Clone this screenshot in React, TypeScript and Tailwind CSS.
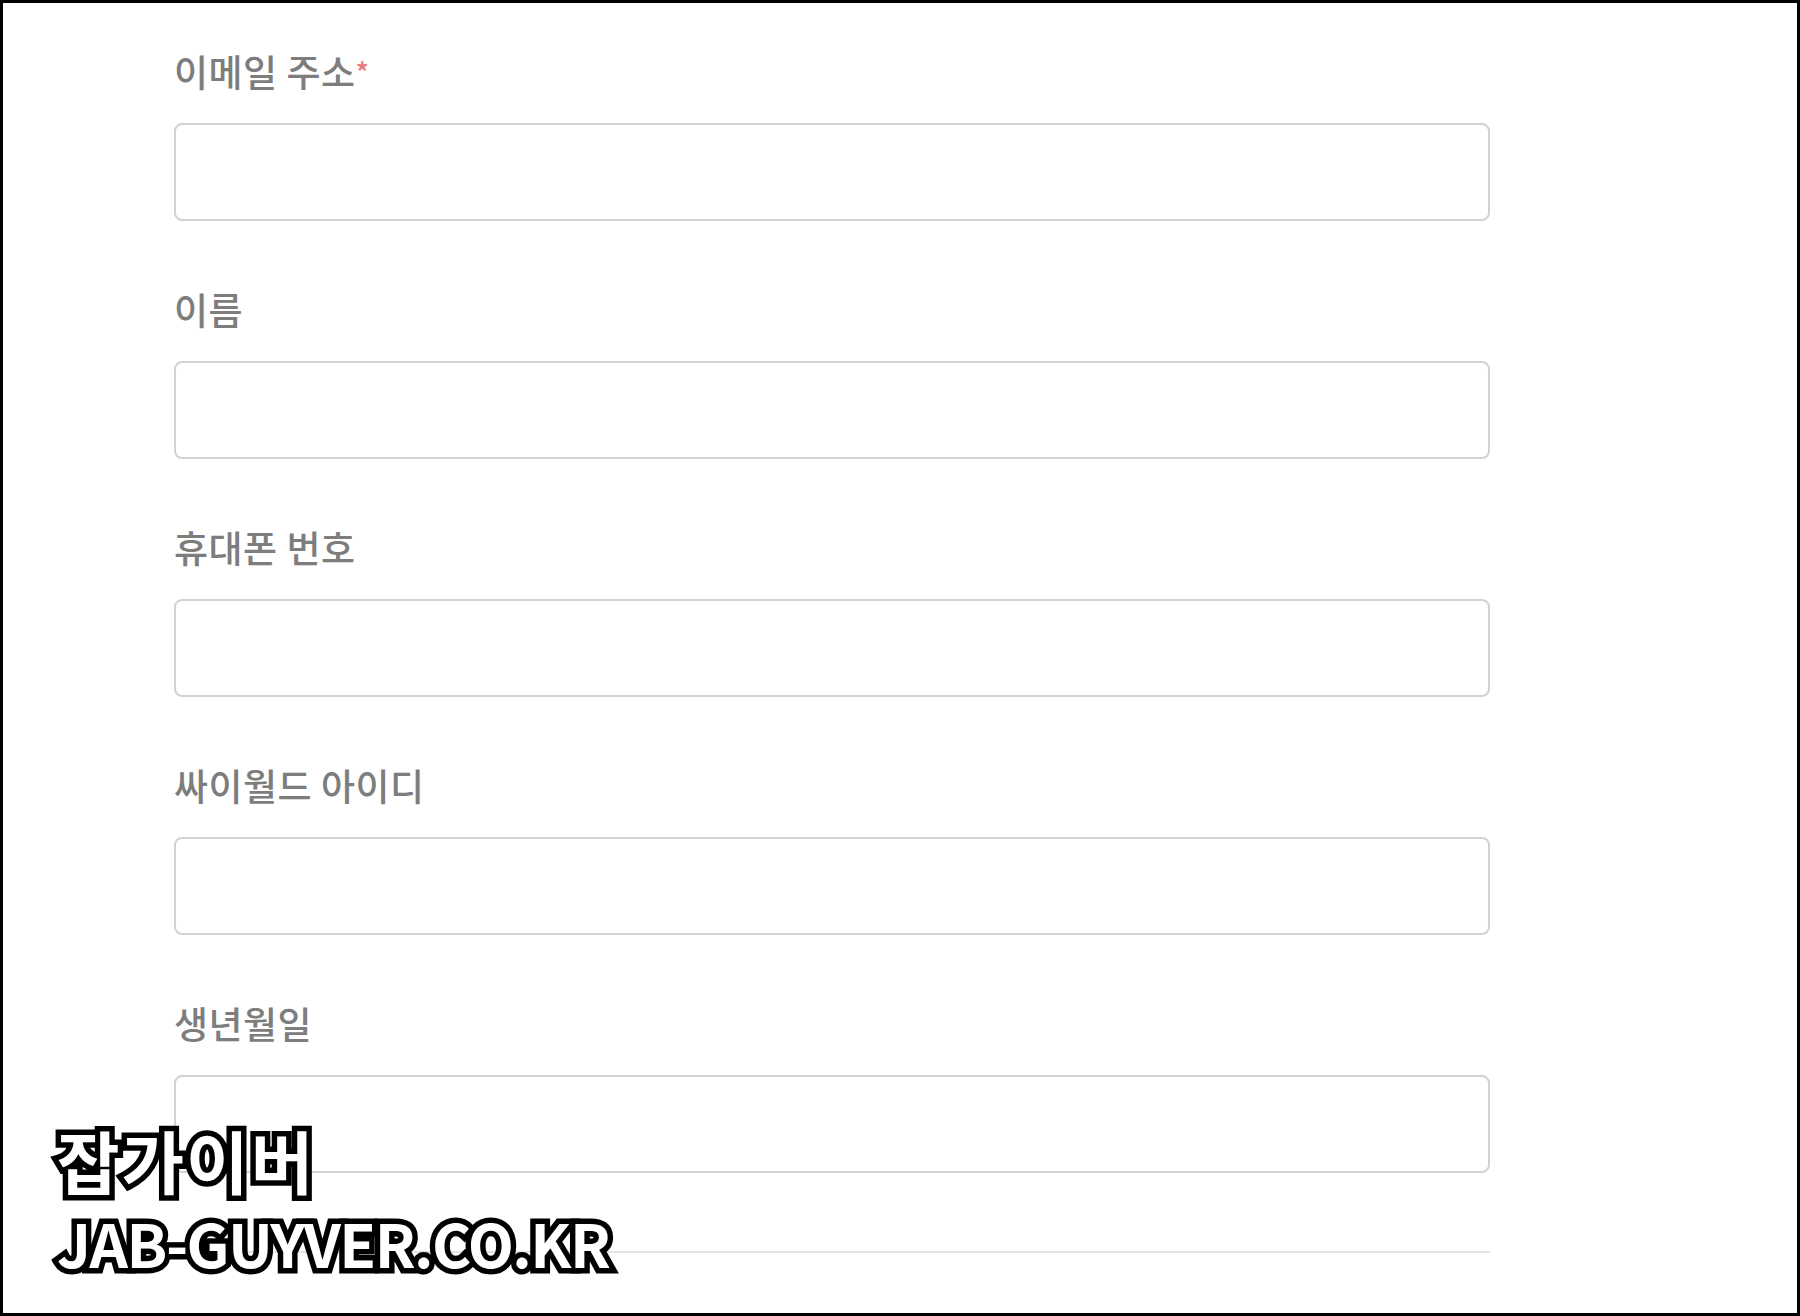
import React from 'react';

interface FieldProps {
  label: string;
  required?: boolean;
}

const Field: React.FC<FieldProps> = ({ label, required }) => (
  <div className="flex flex-col">
    <label className="text-[37px] leading-[40px] font-medium tracking-[0.5px] text-[#7d7d7d] mb-[32px]">
      {label}
      {required && <span className="text-[#e8797a] text-[28px] align-top">*</span>}
    </label>
    <div className="h-[98px] w-[1316px] rounded-[8px] border-2 border-[#d2d2d2] bg-white mb-[68px]" />
  </div>
);

const fields: FieldProps[] = [
  { label: '이메일 주소', required: true },
  { label: '이름' },
  { label: '휴대폰 번호' },
  { label: '싸이월드 아이디' },
  { label: '생년월일' },
];

const App: React.FC = () => {
  return (
    <div
      className="relative h-[1316px] w-full overflow-hidden border-[3px] border-black bg-white"
      style={{ fontFamily: '"Noto Sans CJK KR", "Noto Sans", sans-serif' }}
    >
      <div className="pl-[171px] pt-[48px]">
        {fields.map(f => (
          <Field key={f.label} {...f} />
        ))}
        <div className="mt-[10px] h-[2px] w-[1316px] bg-[#e4e4e4]" />
      </div>

      {/* watermark */}
      <div className="absolute left-[54px] top-[1112px] flex flex-col font-bold text-white [paint-order:stroke_fill] [-webkit-text-stroke:11px_black]">
        <span className="text-[68px] leading-[90px] tracking-[2px]">잡가이버</span>
        <span className="text-[60px] leading-[74px] tracking-[-1.5px]">JAB-GUYVER.CO.KR</span>
      </div>
    </div>
  );
};

export default App;
